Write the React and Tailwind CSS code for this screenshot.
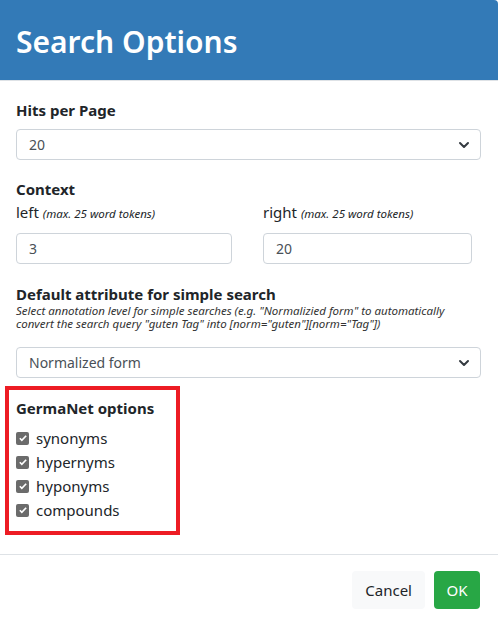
import { ChevronDown } from "lucide-react";

function Select({ value }) {
  return (
    <div className="flex items-center justify-between h-[31px] border border-[#ced4da] rounded-[4px] pl-3 pr-2 text-[14px] text-[#495057]">
      <span>{value}</span>
      <ChevronDown className="w-4 h-4 text-[#343a40]" strokeWidth={3} />
    </div>
  );
}

function Checkbox({ label }) {
  return (
    <label className="flex items-center h-6 text-[15px] text-[#212529]">
      <span className="w-[13px] h-[13px] rounded-[2px] bg-[#6b6b6b] flex items-center justify-center mr-[7px]">
        <svg viewBox="0 0 12 12" className="w-[10px] h-[10px]">
          <path d="M2.2 6.3l2.4 2.4 5.2-5.4" fill="none" stroke="#fff" strokeWidth="2" />
        </svg>
      </span>
      {label}
    </label>
  );
}

export default function App() {
  return (
    <div className="w-[498px] h-[620px] bg-white font-['Noto_Sans',sans-serif] text-[#212529] flex flex-col">
      <div className="h-[81px] bg-[#337ab7] border-b border-[#dee2e6] flex items-center px-4 pt-[3px] rounded-tr-[4px]">
        <h1 className="text-[30px] font-semibold text-white leading-none">Search Options</h1>
      </div>

      <div className="pl-4 pr-[17px] pt-[19px]">
        <p className="font-bold text-[15px] leading-5">Hits per Page</p>
        <div className="mt-[9px]">
          <Select value="20" />
        </div>

        <p className="font-bold text-[15px] leading-5 mt-[19px]">Context</p>
        <div className="grid grid-cols-[216px_209px] gap-x-[31px] mt-[3px]">
          <div>
            <p className="text-[15px] leading-5">
              left <i className="text-[11.5px] leading-5">(max. 25 word tokens)</i>
            </p>
            <div className="mt-[9px] h-[31px] border border-[#ced4da] rounded-[4px] px-3 flex items-center text-[14px] text-[#495057]">3</div>
          </div>
          <div>
            <p className="text-[15px] leading-5">
              right <i className="text-[11.5px] leading-5">(max. 25 word tokens)</i>
            </p>
            <div className="mt-[9px] h-[31px] border border-[#ced4da] rounded-[4px] px-3 flex items-center text-[14px] text-[#495057]">20</div>
          </div>
        </div>

        <p className="font-bold text-[15px] leading-5 mt-[20px]">Default attribute for simple search</p>
        <p className="italic text-[11.5px] leading-[13px] text-[#333]">
          Select annotation level for simple searches (e.g. "Normalizied form" to automatically convert the search query "guten Tag" into [norm="guten"][norm="Tag"])
        </p>
        <div className="mt-[17px]">
          <Select value="Normalized form" />
        </div>
      </div>

      <div className="ml-[5px] mt-[8px] w-[175px] border-[4px] border-[#ed1c24] px-[7px] pt-[8px] pb-[9px]">
        <p className="font-bold text-[15px] leading-5 mb-[8px]">GermaNet options</p>
        <Checkbox label="synonyms" />
        <Checkbox label="hypernyms" />
        <Checkbox label="hyponyms" />
        <Checkbox label="compounds" />
      </div>

      <div className="mt-[19px] border-t border-[#dee2e6] flex justify-end gap-[9px] pl-4 pr-[18px] pt-4">
        <button className="h-[38px] px-[13px] rounded-[4px] bg-[#f8f9fa] text-[15px] text-[#212529]">Cancel</button>
        <button className="h-[38px] w-[46px] rounded-[4px] bg-[#28a745] text-[15px] text-white">OK</button>
      </div>
    </div>
  );
}
